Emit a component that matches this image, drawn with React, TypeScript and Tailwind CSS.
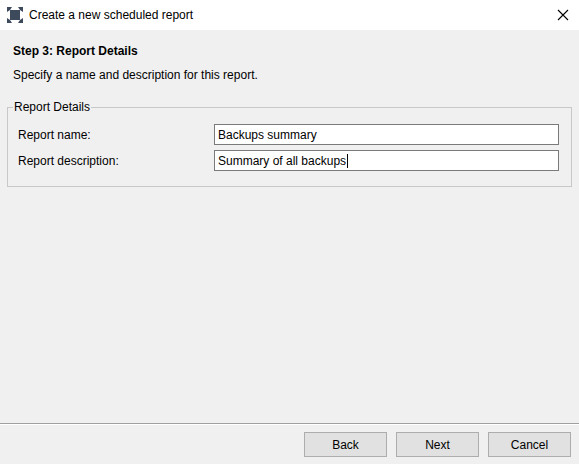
export default function App() {
  const f = { fontFamily: "Tahoma, 'Liberation Sans', Arial, sans-serif" };
  return (
    <div className="w-[579px] h-[464px] flex flex-col bg-[#f0f0f0] text-[12px] text-black overflow-hidden" style={f}>
      <div className="h-[30px] bg-white flex items-center pl-[7px] pr-[10px] shrink-0">
        <svg width="16" height="16" viewBox="0 0 16 16">
          <rect x="3" y="3" width="10" height="10" fill="#3d4a5c" />
          <path d="M0 0h5l-2 3-3 2zM16 0h-5l2 3 3 2zM0 16h5l-2-3-3-2zM16 16h-5l2-3 3-2z" fill="#3d4a5c" />
        </svg>
        <span className="ml-[6px] text-[12px]">Create a new scheduled report</span>
        <svg className="ml-auto" width="12" height="12" viewBox="0 0 12 12">
          <path d="M1 1L11 11M11 1L1 11" stroke="#000" strokeWidth="1.1" />
        </svg>
      </div>
      <div className="flex-1 flex flex-col">
        <div className="px-[13px] pt-[14px] font-bold leading-[15px]">Step 3: Report Details</div>
        <div className="px-[13px] pt-[9px] leading-[15px]">Specify a name and description for this report.</div>
        <div className="relative mx-[7px] mt-[24px] h-[80px] border border-[#c8c8c8] pl-[10px] pr-[12px] pt-[16px]">
          <span className="absolute left-[5px] top-[-8px] bg-[#f0f0f0] px-[1px] leading-[15px]">Report Details</span>
          <div className="flex items-center h-[21px]">
            <span className="w-[196px]">Report name:</span>
            <div className="flex-1 h-[21px] bg-white border border-[#7a7a7a] flex items-center px-[3px]">Backups summary</div>
          </div>
          <div className="flex items-center h-[21px] mt-[5px]">
            <span className="w-[196px]">Report description:</span>
            <div className="flex-1 h-[21px] bg-white border border-[#7a7a7a] flex items-center px-[3px]">Summary of all backups<span className="inline-block w-px h-[14px] bg-black ml-px" /></div>
          </div>
        </div>
      </div>
      <div className="h-px bg-[#a0a0a0]" />
      <div className="h-[40px] flex items-start justify-end gap-[9px] pr-[8px] pt-[7px] shrink-0 border-t border-white">
        {["Back", "Next", "Cancel"].map((b) => (
          <div key={b} className="w-[83px] h-[25px] bg-[#e1e1e1] border border-[#adadad] flex items-center justify-center">{b}</div>
        ))}
      </div>
    </div>
  );
}
